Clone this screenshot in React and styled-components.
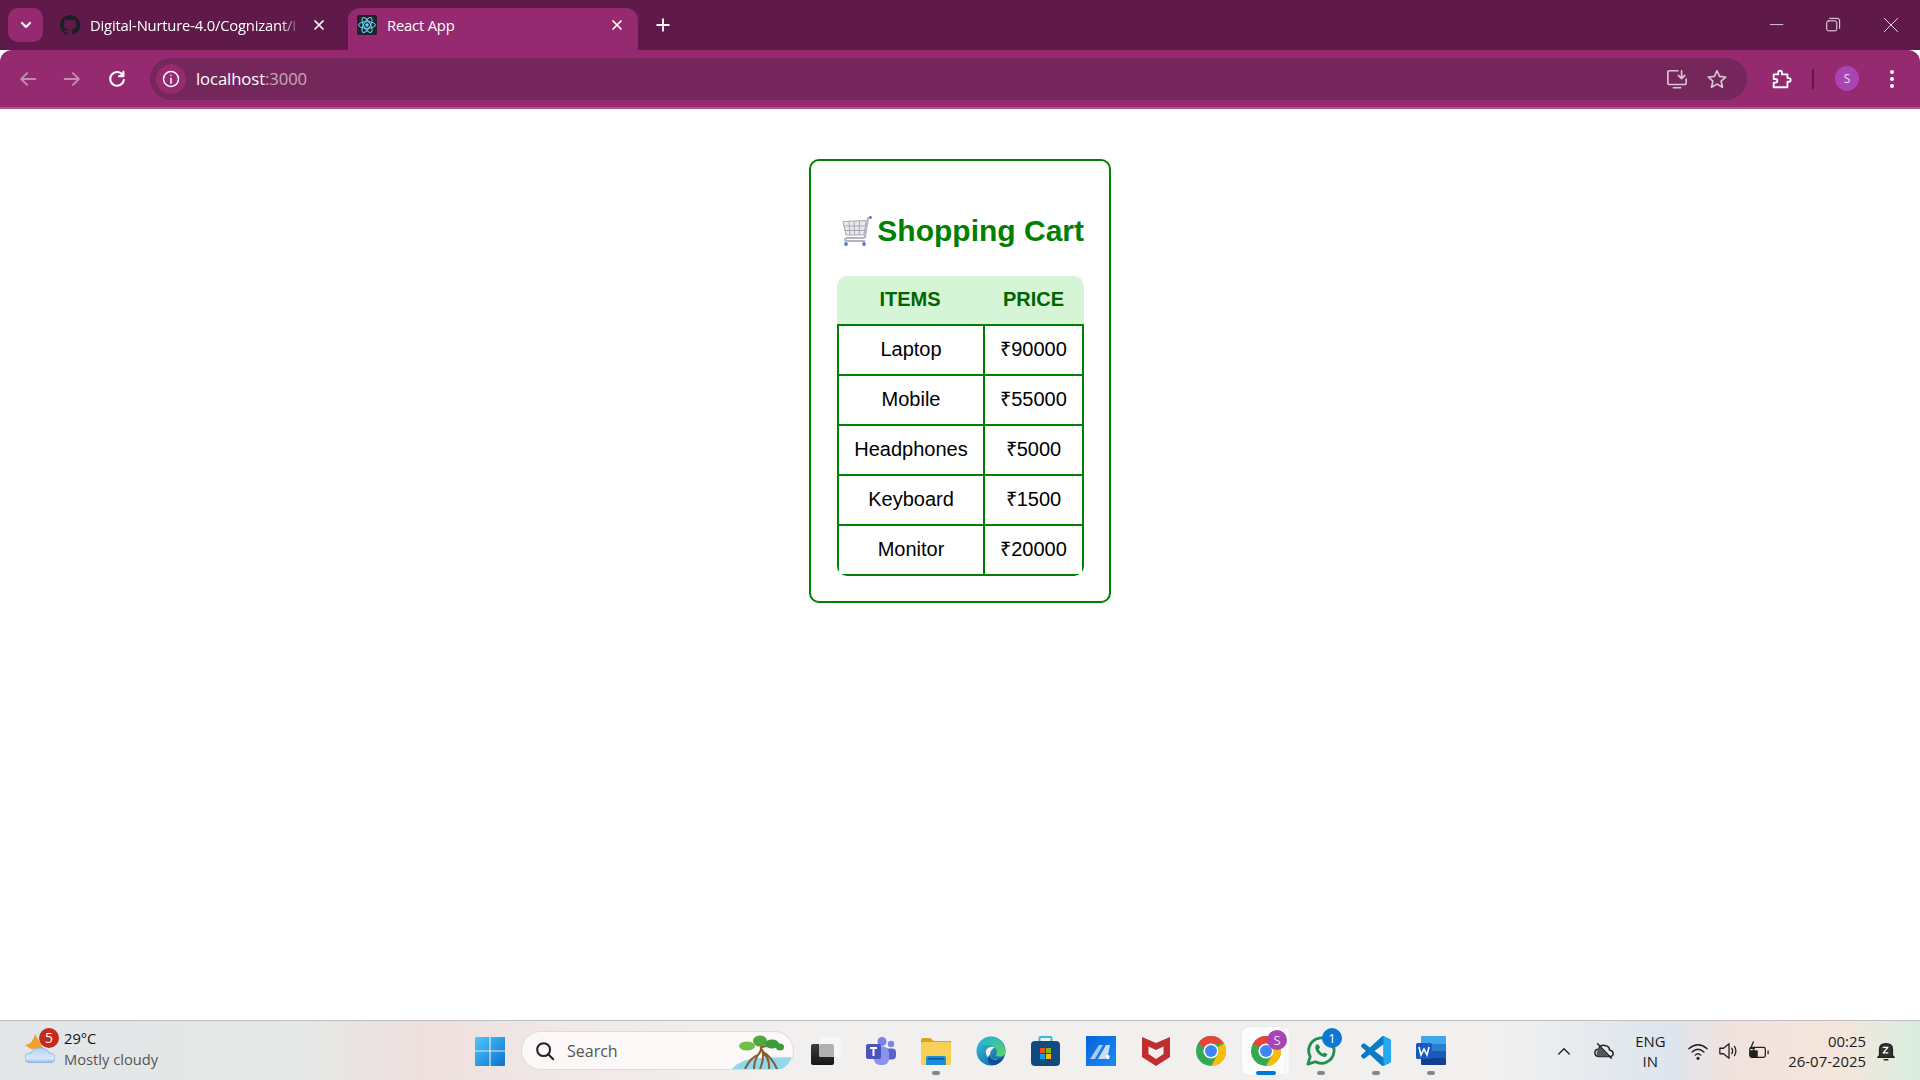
import React from "react";
import styled, { createGlobalStyle } from "styled-components";

const GlobalStyle = createGlobalStyle`
  html, body { margin: 0; padding: 0; background: #fff; }
  body { font-family: "Open Sans", "Noto Sans", sans-serif; }
`;

const Screen = styled.div`
  width: 1920px;
  height: 1080px;
  display: flex;
  flex-direction: column;
  overflow: hidden;
`;

/* browser chrome */
const TabStrip = styled.div`
  height: 50px;
  flex: none;
  display: flex;
  align-items: flex-end;
  background: #601a4a;
  color: #fff;
  position: relative;
`;
const TabSearch = styled.div`
  width: 35px;
  height: 34px;
  margin: 0 0 8px 8px;
  border-radius: 10px;
  background: #962a70;
  display: flex;
  align-items: center;
  justify-content: center;
`;
const Tab = styled.div`
  width: ${(p) => p.$w}px;
  height: 42px;
  margin-left: ${(p) => p.$ml}px;
  padding: 0 ${(p) => p.$pr}px 8px ${(p) => p.$pl}px;
  box-sizing: border-box;
  display: flex;
  align-items: center;
  gap: 10px;
  font-size: 14.8px;
  border-radius: 12px 12px 0 0;
  background: ${(p) => (p.$active ? "#962a70" : "transparent")};
`;
const TabTitle = styled.span`
  flex: 1;
  white-space: nowrap;
  overflow: hidden;
  letter-spacing: -0.2px;
  mask-image: ${(p) => (p.$fade ? "linear-gradient(90deg, #000 90%, transparent)" : "none")};
`;
const NewTab = styled.div`
  margin: 0 0 15px 15px;
  display: flex;
`;
const WindowButtons = styled.div`
  margin-left: auto;
  height: 50px;
  display: flex;
  align-items: center;
  gap: 36px;
  padding: 0 19px 0 0;
  box-sizing: border-box;
`;
const WinGlyph = styled.div`
  display: flex;
  margin-left: ${(p) => p.$ml || 0}px;
`;
const Toolbar = styled.div`
  height: 57px;
  flex: none;
  display: flex;
  align-items: center;
  background: #962a70;
  border-radius: 12px 12px 0 0;
  padding: 0 17px 0 17px;
  box-sizing: border-box;
`;
const ToolbarLine = styled.div`
  height: 2px;
  flex: none;
  background: #b2518f;
`;
const NavIcon = styled.div`
  width: 22px;
  height: 22px;
  display: flex;
  margin-right: ${(p) => p.$mr || 0}px;
  margin-left: ${(p) => p.$ml || 0}px;
  opacity: ${(p) => (p.$dim ? 0.45 : 1)};
`;
const Omnibox = styled.div`
  flex: none;
  width: 1597px;
  height: 42px;
  margin-left: 22px;
  border-radius: 21px;
  background: #75275c;
  display: flex;
  align-items: center;
  padding: 0 19px 0 6px;
  box-sizing: border-box;
`;
const InfoChip = styled.div`
  width: 30px;
  height: 30px;
  border-radius: 50%;
  background: #962a70;
  display: flex;
  align-items: center;
  justify-content: center;
`;
const Url = styled.div`
  margin-left: 10px;
  flex: 1;
  font-size: 16.7px;
  color: #fff;
  letter-spacing: -0.1px;
  span { color: #c9a9be; }
`;
const Avatar = styled.div`
  width: 25px;
  height: 25px;
  border-radius: 50%;
  background: #a944b5;
  color: #f3dcf5;
  font-size: 12px;
  display: flex;
  align-items: center;
  justify-content: center;
  margin-left: 21px;
`;
const ToolDivider = styled.div`
  width: 2px;
  height: 20px;
  margin-left: 20px;
  background: #601a4a;
`;

/* page */
const Page = styled.main`
  flex: 1;
  display: flex;
  justify-content: center;
  align-items: flex-start;
  padding-top: 50px;
  box-sizing: border-box;
  font-family: "Liberation Sans", Arial, sans-serif;
`;
const Card = styled.section`
  width: 302px;
  height: 444px;
  box-sizing: border-box;
  border: 2px solid #008000;
  border-radius: 10px;
  padding: 53px 25px 25px 26px;
`;
const CartTitle = styled.h2`
  margin: 0 0 28px;
  height: 34px;
  display: flex;
  align-items: center;
  justify-content: flex-end;
  gap: 5px;
  font-size: 30px;
  line-height: 34px;
  font-weight: 700;
  color: #008000;
  white-space: nowrap;
`;
const TableClip = styled.div`
  width: 247px;
  height: 300px;
  border-radius: 10px;
  overflow: hidden;
`;
const Table = styled.table`
  width: 247px;
  table-layout: fixed;
  border-collapse: separate;
  border-spacing: 0;
  font-size: 20px;
  line-height: 20px;
`;
const HeadCell = styled.th`
  height: 46px;
  padding: 0 0 2px;
  box-sizing: content-box;
  background: #d6f5d6;
  color: #006400;
  font-weight: 700;
  text-transform: uppercase;
  border-bottom: 2px solid #008000;
  width: ${(p) => p.$w}px;
`;
const Cell = styled.td`
  height: 46px;
  padding: 0 0 2px;
  text-align: center;
  color: #000;
  border-bottom: 2px solid #008000;
  border-left: 2px solid #008000;
  &:last-child { border-right: 2px solid #008000; }
`;

/* taskbar */
const Taskbar = styled.footer`
  height: 60px;
  flex: none;
  box-sizing: border-box;
  border-top: 1px solid #bdbdbd;
  position: relative;
  display: flex;
  align-items: center;
  background: linear-gradient(90deg, #e2e6e8 0%, #e6e8e6 16%, #efe0df 22%, #f0e9e8 30%, #f1f0ef 40%, #f1f0ef 78%, #dde5ee 87%, #f2e2de 90%, #f4e6dc 96%, #d8eee0 100%);
`;
const Weather = styled.div`
  width: 475px;
  height: 40px;
  flex: none;
  display: flex;
  align-items: center;
  padding-left: 25px;
  box-sizing: border-box;
  position: relative;
`;
const WeatherArt = styled.div`
  display: flex;
  margin-top: -5px;
`;
const WeatherBadge = styled.div`
  position: absolute;
  left: 39px;
  top: -3px;
  width: 20px;
  height: 20px;
  border-radius: 50%;
  background: #c42b1c;
  color: #fff;
  font-size: 14px;
  display: flex;
  align-items: center;
  justify-content: center;
`;
const WeatherText = styled.div`
  margin-left: 9px;
  margin-top: -4px;
  font-size: 14.7px;
  line-height: 21px;
  color: #111;
  small { display: block; font-size: 14.7px; color: #555; }
`;
const AppIcon = styled.div`
  width: ${(p) => p.$w || 55}px;
  height: 48px;
  flex: none;
  position: relative;
  display: flex;
  align-items: center;
  justify-content: center;
  > svg { position: relative; }
  ${(p) =>
    p.$active &&
    `&::before {
      content: "";
      position: absolute;
      inset: 0 8px 0 4px;
      border-radius: 6px;
      background: rgba(255, 255, 255, 0.8);
      box-shadow: 0 0 1px rgba(0, 0, 0, 0.25), 5px 0 0 -1px rgba(255, 255, 255, 0.7);
    }`}
`;
const RunDot = styled.div`
  position: absolute;
  bottom: 0;
  left: 50%;
  transform: translateX(-50%);
  width: ${(p) => (p.$active ? 20 : 8)}px;
  height: 4px;
  border-radius: 2px;
  background: ${(p) => (p.$active ? "#0078d4" : "#868686")};
`;
const IconBadge = styled.div`
  position: absolute;
  top: ${(p) => p.$top}px;
  right: 6px;
  width: 20px;
  height: 20px;
  border-radius: 50%;
  background: ${(p) => p.$bg};
  color: ${(p) => p.$fg || "#fff"};
  font-size: 13px;
  display: flex;
  align-items: center;
  justify-content: center;
`;
const SearchBox = styled.div`
  width: 273px;
  height: 39px;
  flex: none;
  margin: 0 4px 0 16px;
  box-sizing: border-box;
  border-radius: 20px;
  background: #fbf8f7;
  border: 1px solid #dcdcdc;
  display: flex;
  align-items: center;
  padding: 0 0 0 12px;
  gap: 11px;
  font-size: 16px;
  color: #555;
  position: relative;
`;
const SearchArt = styled.div`
  position: absolute;
  right: 2px;
  bottom: 0;
  display: flex;
`;
const Tray = styled.div`
  margin-left: auto;
  display: flex;
  align-items: center;
  color: #1a1a1a;
  font-size: 14.9px;
`;
const TrayIcon = styled.div`
  display: flex;
  margin-left: ${(p) => p.$ml}px;
  margin-right: ${(p) => p.$mr || 0}px;
`;
const Lang = styled.div`
  margin-left: 19px;
  width: 32px;
  text-align: center;
  line-height: 20px;
`;
const Clock = styled.div`
  margin-left: 19px;
  text-align: right;
  line-height: 20px;
`;

const Stroke = ({ size = 22, sw = 2, children, color = "#fff", view = 24 }) => (
  <svg width={size} height={size} viewBox={`0 0 ${view} ${view}`} fill="none" stroke={color} strokeWidth={sw} strokeLinecap="round" strokeLinejoin="round">
    {children}
  </svg>
);

const CartEmoji = () => (
  <svg width="30" height="30" viewBox="0 0 30 30" fill="none">
    <path d="M1 5.5 L24 4.5 L22 19 L4 19 Z" fill="#e8e8ee" stroke="#a8a8b4" strokeWidth="1" />
    <path d="M1.8 10 H23.4 M2.6 14.5 H22.8 M7 5.5 L8 19 M12 5 L12.6 19 M17.5 5 L17.2 19" stroke="#a8a8b4" strokeWidth="1" />
    <path d="M28 1.5 L26 2.5 L23 21 Q22.5 22 21 22 H6 Q3 22 3 23.5 Q3 25 6 25 H23" stroke="#b4b4c0" strokeWidth="2" />
    <circle cx="4" cy="28" r="1.9" fill="#4f7fc4" />
    <circle cx="22" cy="28" r="1.9" fill="#4f7fc4" />
    <circle cx="28.5" cy="1.5" r="1.4" fill="#4f7fc4" />
  </svg>
);

const GithubIcon = () => (
  <svg width="20" height="20" viewBox="0 0 16 16" fill="#1b1f23">
    <path d="M8 0C3.58 0 0 3.58 0 8c0 3.54 2.29 6.53 5.47 7.59.4.07.55-.17.55-.38v-1.34c-2.23.48-2.7-1.07-2.7-1.07-.36-.92-.89-1.17-.89-1.17-.73-.5.05-.49.05-.49.8.06 1.23.83 1.23.83.71 1.22 1.87.87 2.33.66.07-.52.28-.87.5-1.07-1.78-.2-3.64-.89-3.64-3.95 0-.87.31-1.59.82-2.15-.08-.2-.36-1.02.08-2.12 0 0 .67-.21 2.2.82a7.6 7.6 0 0 1 4 0c1.53-1.04 2.2-.82 2.2-.82.44 1.1.16 1.92.08 2.12.51.56.82 1.27.82 2.15 0 3.07-1.87 3.75-3.65 3.95.29.25.54.73.54 1.48v2.2c0 .21.15.46.55.38A8 8 0 0 0 16 8c0-4.42-3.58-8-8-8z" />
  </svg>
);

const ReactFavicon = () => (
  <svg width="20" height="20" viewBox="0 0 20 20" fill="none">
    <rect width="20" height="20" rx="2" fill="#20232a" />
    <g stroke="#61dafb" strokeWidth="1">
      <ellipse cx="10" cy="10" rx="8.4" ry="3.3" />
      <ellipse cx="10" cy="10" rx="8.4" ry="3.3" transform="rotate(60 10 10)" />
      <ellipse cx="10" cy="10" rx="8.4" ry="3.3" transform="rotate(120 10 10)" />
    </g>
    <circle cx="10" cy="10" r="1.7" fill="#61dafb" />
  </svg>
);

const CloseX = () => (
  <Stroke size={16} sw={2.6}><path d="M6 6 L18 18 M18 6 L6 18" /></Stroke>
);

const WeatherIcon = () => (
  <svg width="30" height="30" viewBox="0 0 30 30" fill="none">
    <defs>
      <linearGradient id="cloudFill" x1="0" y1="0" x2="0" y2="1">
        <stop offset="0" stopColor="#b4d2f6" />
        <stop offset="0.7" stopColor="#d8e8fb" />
        <stop offset="1" stopColor="#8ab4ea" />
      </linearGradient>
    </defs>
    <path d="M0 12 Q8 11 10 1 Q14 8 18 15 L6 16 Z" fill="#eda32b" />
    <path d="M6 30 Q0 30 0 25 Q0 20 6 20 Q8 15 15 15 Q22 15 24 20 Q30 20 30 25 Q30 30 24 30 Z" fill="url(#cloudFill)" stroke="#86aee6" strokeWidth="0.8" />
  </svg>
);

const WindowsLogo = () => (
  <svg width="30" height="30" viewBox="0 0 30 30">
    <defs>
      <linearGradient id="win" x1="0" y1="0" x2="1" y2="1">
        <stop offset="0" stopColor="#4fc8fa" />
        <stop offset="1" stopColor="#0a72cf" />
      </linearGradient>
    </defs>
    <path d="M1 1 H14.4 V14.4 H0 V2 Q0 1 1 1Z M15.6 1 H30 V14.4 H15.6Z M0 15.6 H14.4 V30 H1 Q0 30 0 29Z M15.6 15.6 H30 V29 Q30 30 29 30 H15.6Z" fill="url(#win)" />
  </svg>
);

const TreeArt = () => (
  <svg width="59" height="34" viewBox="0 0 59 34" fill="none">
    <path d="M0 34 Q8 24 26 23 L59 22 Q58 29 50 34 Z" fill="#90d8ec" />
    <path d="M29 10 Q30 16 26 20 Q18 23 13 34 M26 20 Q22 26 22 34 M30 14 Q33 22 28 34 M30 16 Q40 22 45 34 M31 18 Q38 24 37 34 M30 12 L42 9" stroke="#8a5a2b" strokeWidth="2" />
    <ellipse cx="28" cy="6" rx="7" ry="5.5" fill="#4fa83d" />
    <ellipse cx="15" cy="11" rx="8" ry="4.5" fill="#74bf46" />
    <ellipse cx="40" cy="9" rx="7" ry="4.5" fill="#3e9a3a" />
    <ellipse cx="48" cy="12" rx="4" ry="3.5" fill="#3e9a3a" />
  </svg>
);

const TerminalIcon = () => (
  <svg width="30" height="28" viewBox="0 0 30 28">
    <defs>
      <linearGradient id="termDark" x1="0" y1="0" x2="0" y2="1">
        <stop offset="0" stopColor="#3c3c3c" />
        <stop offset="1" stopColor="#161616" />
      </linearGradient>
    </defs>
    <rect x="0" y="7" width="23" height="21" rx="2" fill="url(#termDark)" />
    <rect x="8" y="0" width="22" height="20" rx="2" fill="#f6f6f6" />
    <rect x="8" y="7" width="15" height="13" rx="2" fill="#b0b0b0" />
  </svg>
);

const TeamsIcon = () => (
  <svg width="30" height="28" viewBox="0 0 30 28">
    <circle cx="25" cy="7" r="3.2" fill="#7b83eb" />
    <rect x="19" y="11.5" width="11" height="11" rx="4" fill="#5a62c8" />
    <circle cx="16" cy="4.5" r="4.5" fill="#7b83eb" />
    <rect x="8" y="9.5" width="15" height="18.5" rx="6" fill="#8a91ee" />
    <rect x="0" y="7" width="15" height="15" rx="2" fill="#4b53bc" />
    <path d="M4 11 H11 M7.5 11 V19" stroke="#fff" strokeWidth="2" />
  </svg>
);

const FolderIcon = () => (
  <svg width="30" height="28" viewBox="0 0 30 28">
    <path d="M0 3 Q0 1 2 1 H9 L13 4 H30 V10 H0Z" fill="#dda11c" />
    <rect x="0" y="5" width="30" height="23" rx="1.5" fill="#f8cf57" />
    <path d="M5 21 Q5 19 7 19 H23 Q25 19 25 21 V28 H5Z" fill="#1a8ed8" />
    <rect x="7" y="21" width="16" height="1.5" fill="#0c5a9c" />
  </svg>
);

const EdgeIcon = () => (
  <svg width="30" height="30" viewBox="0 0 32 32">
    <defs>
      <linearGradient id="edgeA" x1="0" y1="0" x2="1" y2="1">
        <stop offset="0" stopColor="#36c4d8" />
        <stop offset="1" stopColor="#0c59a4" />
      </linearGradient>
      <linearGradient id="edgeB" x1="0" y1="0" x2="1" y2="1">
        <stop offset="0" stopColor="#1bb4d8" />
        <stop offset="1" stopColor="#5fd85a" />
      </linearGradient>
    </defs>
    <circle cx="16" cy="16" r="15.5" fill="url(#edgeA)" />
    <path d="M4 8 C12 -3 30 0 31.5 17 C31.5 22 25 23 21 21 C24 17 22 11 16 10 C11 9 6 11 4 8Z" fill="url(#edgeB)" />
    <path d="M20 12 C13 10 9 15 11 20 C13 25 19 26 23 25 C18 27 15 24 15 20 C15 16 17 14 20 12Z" fill="#f1f0ef" />
    <path d="M15 20 C15 25 20 27 24 25 C27 24 30 22 30 22 C27 29 20 33 15 30 C12 28 12 22 15 20Z" fill="#0c4f94" />
  </svg>
);

const StoreIcon = () => (
  <svg width="29" height="30" viewBox="0 0 29 30">
    <path d="M8.5 6 V2 Q8.5 1 9.5 1 H19.5 Q20.5 1 20.5 2 V6" fill="none" stroke="#35b8ea" strokeWidth="2" />
    <rect x="0" y="5" width="29" height="25" rx="4" fill="#124a80" />
    <rect x="9" y="12" width="5" height="5" fill="#f25022" />
    <rect x="15" y="12" width="5" height="5" fill="#7fba00" />
    <rect x="9" y="18" width="5" height="5" fill="#00a4ef" />
    <rect x="15" y="18" width="5" height="5" fill="#ffb900" />
  </svg>
);

const BlueAppIcon = () => (
  <svg width="30" height="30" viewBox="0 0 30 30">
    <defs>
      <linearGradient id="blueApp" x1="0" y1="0" x2="1" y2="1">
        <stop offset="0" stopColor="#0862dc" />
        <stop offset="1" stopColor="#1b8af0" />
      </linearGradient>
    </defs>
    <rect width="30" height="30" fill="url(#blueApp)" />
    <path d="M4 23 L13 9 H17 L9 23Z" fill="#a8ccf4" />
    <path d="M12 23 L20 9 H24 L22 19 Q20 19 19 23Z" fill="#c8def8" />
    <circle cx="21.5" cy="21" r="2.2" fill="#fff" />
  </svg>
);

const McAfeeIcon = () => (
  <svg width="28" height="30" viewBox="0 0 28 30">
    <path d="M0 1 L14 7 L28 1 V21 L14 30 L0 21Z M6.5 10.5 V18 L14 23 L21.5 18 V10.5 L14 14Z" fill="#c02f2f" fillRule="evenodd" />
  </svg>
);

const ChromeIcon = () => (
  <svg width="30" height="30" viewBox="0 0 30 30">
    <circle cx="15" cy="15" r="15" fill="#34a853" />
    <path d="M15 0 A15 15 0 0 1 28 7.5 H15 A7.5 7.5 0 0 0 8.5 11.3 L2 7.5 A15 15 0 0 1 15 0Z" fill="#ea4335" />
    <path d="M28 7.5 A15 15 0 0 1 15 30 L21.5 18.7 A7.5 7.5 0 0 0 21.5 11 Z" fill="#fbbc05" />
    <circle cx="15" cy="15" r="7.6" fill="#fff" />
    <circle cx="15" cy="15" r="6" fill="#4285f4" />
  </svg>
);

const WhatsappIcon = () => (
  <svg width="30" height="30" viewBox="0 0 32 32" fill="none">
    <path d="M2 30 L4.5 22 A13.5 13.5 0 1 1 10 27.5 Z" stroke="#1f8f52" strokeWidth="3" strokeLinejoin="round" />
    <path d="M11 9 Q8.5 12 11.5 17 Q15.5 22.5 21 22.5 L23 19.5 L19.5 17.5 L18 19 Q15 17.5 13.5 14 L15 12.5 L13.5 9Z" fill="#1f8f52" />
  </svg>
);

const VSCodeIcon = () => (
  <svg width="30" height="30" viewBox="0 0 100 100">
    <path d="M70.9 99.3a6.2 6.2 0 0 0 5-.2l20.6-9.9a6.2 6.2 0 0 0 3.5-5.6V16.4a6.2 6.2 0 0 0-3.5-5.6L75.9.9a6.2 6.2 0 0 0-7.1 1.2L29.4 38 12.2 25a4.2 4.2 0 0 0-5.3.2L1.4 30.3a4.2 4.2 0 0 0 0 6.2L16.3 50 1.4 63.6a4.2 4.2 0 0 0 0 6.2l5.5 5a4.2 4.2 0 0 0 5.3.2L29.4 62l39.4 36a6.2 6.2 0 0 0 2.1 1.3zM75 27.3 45.1 50 75 72.7V27.3z" fill="#0a7cc6" fillRule="evenodd" />
    <path d="M75 .6 L96.5 10.8a6.2 6.2 0 0 1 3.5 5.6v67.2a6.2 6.2 0 0 1-3.5 5.6L75 99.4Z" fill="#24a8f0" />
  </svg>
);

const WordIcon = () => (
  <svg width="30" height="29" viewBox="0 0 30 29">
    <rect x="5" y="0" width="25" height="8" rx="1" fill="#41a5ee" />
    <rect x="5" y="8" width="25" height="7" fill="#2b7cd3" />
    <rect x="5" y="15" width="25" height="7" fill="#185abd" />
    <rect x="5" y="22" width="25" height="7" rx="1" fill="#103f91" />
    <rect x="0" y="7" width="16" height="16" rx="1.5" fill="#185abd" />
    <path d="M3 11 L5 19 L8 13 L11 19 L13 11" stroke="#fff" strokeWidth="1.6" fill="none" />
  </svg>
);

const rows = [
  ["Laptop", 90000],
  ["Mobile", 55000],
  ["Headphones", 5000],
  ["Keyboard", 1500],
  ["Monitor", 20000],
];

export default function App() {
  return (
    <Screen>
      <GlobalStyle />
      <TabStrip>
        <TabSearch>
          <Stroke size={16} sw={3.2}><path d="M6 9 L12 15 L18 9" /></Stroke>
        </TabSearch>
        <Tab $w={283} $ml={7} $pl={10} $pr={6}>
          <GithubIcon />
          <TabTitle $fade>Digital-Nurture-4.0/Cognizant/I</TabTitle>
          <CloseX />
        </Tab>
        <Tab $w={290} $ml={15} $pl={9} $pr={13} $active>
          <ReactFavicon />
          <TabTitle>React App</TabTitle>
          <CloseX />
        </Tab>
        <NewTab>
          <Stroke size={20} sw={2.2}><path d="M12 5 V19 M5 12 H19" /></Stroke>
        </NewTab>
        <WindowButtons>
          <WinGlyph>
            <Stroke size={20} sw={1} color="#f3e6ee"><path d="M4 11.5 H19" /></Stroke>
          </WinGlyph>
          <WinGlyph>
            <Stroke size={20} sw={1.2} color="#f3e6ee"><rect x="4.5" y="7" width="12" height="12" rx="2" /><path d="M8 4 H17 Q20 4 20 7 V16" /></Stroke>
          </WinGlyph>
          <WinGlyph $ml={2}>
            <Stroke size={20} sw={1.1} color="#f3e6ee"><path d="M4 4 L20 20 M20 4 L4 20" /></Stroke>
          </WinGlyph>
        </WindowButtons>
      </TabStrip>
      <Toolbar>
        <NavIcon $dim $mr={22}>
          <Stroke><path d="M20 12 H5 M11 5.5 L4.5 12 L11 18.5" /></Stroke>
        </NavIcon>
        <NavIcon $dim $mr={23}>
          <Stroke><path d="M4 12 H19 M13 5.5 L19.5 12 L13 18.5" /></Stroke>
        </NavIcon>
        <NavIcon>
          <Stroke sw={2.2}><path d="M18.5 8 A7.5 7.5 0 1 0 19.5 13" /><path d="M19 4 V9 H14" fill="#fff" /></Stroke>
        </NavIcon>
        <Omnibox>
          <InfoChip>
            <Stroke size={20} sw={1.8}><circle cx="12" cy="12" r="9" /><path d="M12 11 V17 M12 7.5 V7.6" /></Stroke>
          </InfoChip>
          <Url>localhost<span>:3000</span></Url>
          <NavIcon $mr={18}>
            <Stroke color="#d8c6d2" sw={1.8}><path d="M13 3 H4 Q2 3 2 5 V16 Q2 18 4 18 H20 Q22 18 22 16 V12 M8 21.5 H16 M17 3 V11 M13.5 8 L17 11.5 L20.5 8" /></Stroke>
          </NavIcon>
          <NavIcon>
            <Stroke color="#d8c6d2" sw={1.8}><path d="M12 3 L14.8 9.2 L21.5 10 L16.5 14.4 L18 21 L12 17.6 L6 21 L7.5 14.4 L2.5 10 L9.2 9.2Z" /></Stroke>
          </NavIcon>
        </Omnibox>
        <NavIcon $ml={23}>
          <Stroke sw={2}><path d="M4 7 H9 V5 Q9 3 11 3 Q13 3 13 5 V7 H19 V11 H21 Q22.5 11 22.5 13 Q22.5 15 21 15 H19 V21 H4 V16 H6 Q8 16 8 14 Q8 12 6 12 H4Z" /></Stroke>
        </NavIcon>
        <ToolDivider />
        <Avatar>S</Avatar>
        <NavIcon $ml={22}>
          <svg width="22" height="22" viewBox="0 0 22 22" fill="#fff">
            <circle cx="11" cy="4" r="2" /><circle cx="11" cy="11" r="2" /><circle cx="11" cy="18" r="2" />
          </svg>
        </NavIcon>
      </Toolbar>
      <ToolbarLine />

      <Page>
        <Card>
          <CartTitle>
            <CartEmoji />
            Shopping Cart
          </CartTitle>
          <TableClip>
            <Table>
              <thead>
                <tr>
                  <HeadCell $w={146}>Items</HeadCell>
                  <HeadCell $w={101}>Price</HeadCell>
                </tr>
              </thead>
              <tbody>
                {rows.map(([name, price]) => (
                  <tr key={name}>
                    <Cell>{name}</Cell>
                    <Cell>₹{price}</Cell>
                  </tr>
                ))}
              </tbody>
            </Table>
          </TableClip>
        </Card>
      </Page>

      <Taskbar>
        <Weather>
          <WeatherArt><WeatherIcon /></WeatherArt>
          <WeatherBadge>5</WeatherBadge>
          <WeatherText>
            29°C
            <small>Mostly cloudy</small>
          </WeatherText>
        </Weather>
        <AppIcon $w={30}><WindowsLogo /></AppIcon>
        <SearchBox>
          <Stroke size={22} sw={2.2} color="#222"><circle cx="10.5" cy="10.5" r="7" /><path d="M15.5 15.5 L21 21" /></Stroke>
          Search
          <SearchArt><TreeArt /></SearchArt>
        </SearchBox>
        <AppIcon><TerminalIcon /></AppIcon>
        <AppIcon><TeamsIcon /></AppIcon>
        <AppIcon><FolderIcon /><RunDot /></AppIcon>
        <AppIcon><EdgeIcon /></AppIcon>
        <AppIcon><StoreIcon /></AppIcon>
        <AppIcon><BlueAppIcon /></AppIcon>
        <AppIcon><McAfeeIcon /></AppIcon>
        <AppIcon><ChromeIcon /></AppIcon>
        <AppIcon $active>
          <ChromeIcon />
          <IconBadge $bg="#a944b5" $fg="#f3dcf5" $top={3}>S</IconBadge>
          <RunDot $active />
        </AppIcon>
        <AppIcon>
          <WhatsappIcon />
          <IconBadge $bg="#0a78d4" $top={1}>1</IconBadge>
          <RunDot />
        </AppIcon>
        <AppIcon><VSCodeIcon /><RunDot /></AppIcon>
        <AppIcon><WordIcon /><RunDot /></AppIcon>
        <Tray>
          <TrayIcon $ml={0}>
            <Stroke size={18} sw={1.8} color="#222"><path d="M5 16 L12 9 L19 16" /></Stroke>
          </TrayIcon>
          <TrayIcon $ml={20}>
            <Stroke size={22} sw={1.6} color="#222"><path d="M7 18 Q2 18 2 14 Q2 10 6 10 Q8 5 13 6 Q18 7 18 11 Q22 12 22 15 Q22 18 18 18Z" /><path d="M5 4 L20 20" /><path d="M4 13 L8 8 L17 18 H7 Q4 18 4 15Z" fill="#555" stroke="none" /></Stroke>
          </TrayIcon>
          <Lang>ENG<br />IN</Lang>
          <TrayIcon $ml={21}>
            <Stroke size={22} sw={1.5} color="#222"><path d="M2 9.5 Q12 1 22 9.5 M5.5 13 Q12 7 18.5 13 M9 16.5 Q12 13.5 15 16.5" /><circle cx="12" cy="20" r="1" fill="#222" /></Stroke>
          </TrayIcon>
          <TrayIcon $ml={9}>
            <Stroke size={22} sw={1.4} color="#222"><path d="M2 9 H6 L12 4 V20 L6 15 H2Z M15 9 Q17 12 15 15 M18 7 Q21 12 18 17" /></Stroke>
          </TrayIcon>
          <TrayIcon $ml={7}>
            <Stroke size={22} sw={1.4} color="#222"><rect x="3" y="8" width="17" height="11" rx="2" /><path d="M23 12 V15" /><path d="M4 12 H11 V18 H4Z" fill="#222" /><path d="M7 2 L4 9 H8 L6 13" /></Stroke>
          </TrayIcon>
          <Clock>00:25<br />26-07-2025</Clock>
          <TrayIcon $ml={9} $mr={23}>
            <Stroke size={22} sw={1.5} color="#222"><path d="M5 17 V10 Q5 4 12 4 Q19 4 19 10 V17 L21 19 H3Z" fill="#333" /><path d="M10 21.5 H14" /><path d="M9 8 H14 L9 14 H14" stroke="#fff" /></Stroke>
          </TrayIcon>
        </Tray>
      </Taskbar>
    </Screen>
  );
}
